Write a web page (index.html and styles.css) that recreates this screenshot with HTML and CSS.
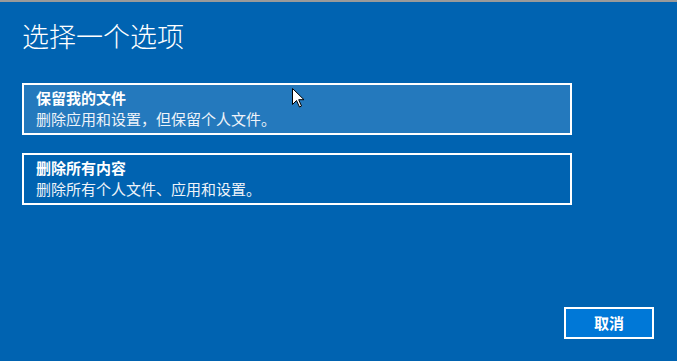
FILE: index.html
```html
<!DOCTYPE html>
<html lang="zh-CN">
<head>
    <meta charset="UTF-8">
    <meta name="viewport" content="width=device-width, initial-scale=1.0">
    <title>选择一个选项</title>
    <link rel="stylesheet" href="styles.css">
</head>
<body>
    <div class="top-strip"></div>
    <div class="page">
        <h1 class="page-title">选择一个选项</h1>
        <div class="option option-hover">
            <div class="option-name">保留我的文件</div>
            <div class="option-desc">删除应用和设置，但保留个人文件。</div>
            <!-- 鼠标指针 -->
            <svg class="cursor" width="13" height="20" viewBox="0 0 13 20">
                <path d="M0.5 0.5 L0.5 16.5 L4.5 12.5 L7.5 19 L9.5 18 L6.7 11.7 L12 11.7 Z" fill="#fff" stroke="#000" stroke-width="1"/>
            </svg>
        </div>
        <div class="option">
            <div class="option-name">删除所有内容</div>
            <div class="option-desc">删除所有个人文件、应用和设置。</div>
        </div>
        <div class="footer">
            <a href="javascript:;" class="btn-cancel">取消</a>
        </div>
    </div>
</body>
</html>
```

FILE: styles.css
```css
* {
    margin: 0;
    padding: 0;
    box-sizing: border-box;
}
html, body {
    height: 100%;
}
body {
    background-color: #0063b1;
    color: #fff;
    font-family: "Noto Sans CJK SC", "Noto Sans", sans-serif;
    overflow: hidden;
}
a {
    text-decoration: none;
    color: #fff;
}
.top-strip {
    height: 2px;
    background-color: #9a9a9a;
}
.page {
    display: flex;
    flex-direction: column;
    height: calc(100% - 2px);
    padding: 21px 23px 22px 22px;
}
.page-title {
    font-size: 27px;
    font-weight: 300;
    line-height: 26px;
    margin-bottom: 34px;
}
.option {
    position: relative;
    width: 550px;
    height: 52px;
    padding: 3px 12px 4px 12px;
    border: 2px solid #fff;
    margin-bottom: 18px;
}
.option-hover {
    background-color: #2479bd;
}
.option-name {
    font-size: 15px;
    font-weight: 700;
    line-height: 20px;
}
.option-desc {
    font-size: 15px;
    line-height: 21px;
    color: #eef3f9;
}
.cursor {
    position: absolute;
    left: 268px;
    top: 3px;
}
.footer {
    margin-top: auto;
    display: flex;
    justify-content: flex-end;
}
.btn-cancel {
    display: block;
    width: 90px;
    height: 32px;
    line-height: 28px;
    text-align: center;
    font-size: 15px;
    font-weight: 700;
    background-color: #0078d7;
    border: 2px solid #fff;
}
```
